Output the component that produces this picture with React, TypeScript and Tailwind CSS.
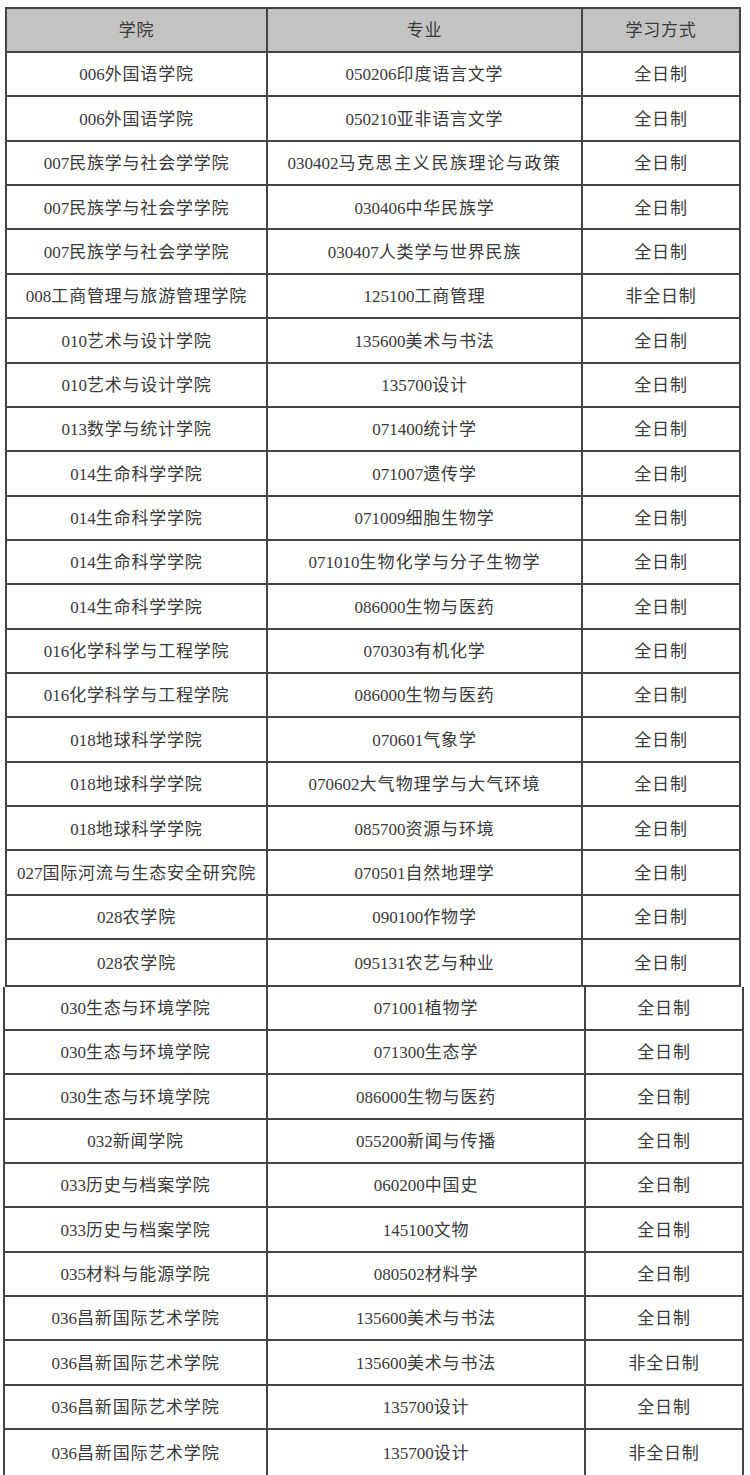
type Row = [string, string, string, string, string];

// [学院代码, 学院名, 专业代码, 专业名, 学习方式]
const topRows: Row[] = [
  ['006', '外国语学院', '050206', '印度语言文学', '全日制'],
  ['006', '外国语学院', '050210', '亚非语言文学', '全日制'],
  ['007', '民族学与社会学学院', '030402', '马克思主义民族理论与政策', '全日制'],
  ['007', '民族学与社会学学院', '030406', '中华民族学', '全日制'],
  ['007', '民族学与社会学学院', '030407', '人类学与世界民族', '全日制'],
  ['008', '工商管理与旅游管理学院', '125100', '工商管理', '非全日制'],
  ['010', '艺术与设计学院', '135600', '美术与书法', '全日制'],
  ['010', '艺术与设计学院', '135700', '设计', '全日制'],
  ['013', '数学与统计学院', '071400', '统计学', '全日制'],
  ['014', '生命科学学院', '071007', '遗传学', '全日制'],
  ['014', '生命科学学院', '071009', '细胞生物学', '全日制'],
  ['014', '生命科学学院', '071010', '生物化学与分子生物学', '全日制'],
  ['014', '生命科学学院', '086000', '生物与医药', '全日制'],
  ['016', '化学科学与工程学院', '070303', '有机化学', '全日制'],
  ['016', '化学科学与工程学院', '086000', '生物与医药', '全日制'],
  ['018', '地球科学学院', '070601', '气象学', '全日制'],
  ['018', '地球科学学院', '070602', '大气物理学与大气环境', '全日制'],
  ['018', '地球科学学院', '085700', '资源与环境', '全日制'],
  ['027', '国际河流与生态安全研究院', '070501', '自然地理学', '全日制'],
  ['028', '农学院', '090100', '作物学', '全日制'],
  ['028', '农学院', '095131', '农艺与种业', '全日制'],
];

const bottomRows: Row[] = [
  ['030', '生态与环境学院', '071001', '植物学', '全日制'],
  ['030', '生态与环境学院', '071300', '生态学', '全日制'],
  ['030', '生态与环境学院', '086000', '生物与医药', '全日制'],
  ['032', '新闻学院', '055200', '新闻与传播', '全日制'],
  ['033', '历史与档案学院', '060200', '中国史', '全日制'],
  ['033', '历史与档案学院', '145100', '文物', '全日制'],
  ['035', '材料与能源学院', '080502', '材料学', '全日制'],
  ['036', '昌新国际艺术学院', '135600', '美术与书法', '全日制'],
  ['036', '昌新国际艺术学院', '135600', '美术与书法', '非全日制'],
  ['036', '昌新国际艺术学院', '135700', '设计', '全日制'],
  ['036', '昌新国际艺术学院', '135700', '设计', '非全日制'],
];

// the scanned table stretches a few long major names
function majorSpacing(code: string) {
  if (code === '030402') return 'tracking-[1.6px]';
  if (code === '071010' || code === '070602') return 'tracking-[1.1px]';
  return 'tracking-[0.8px]';
}

function Cell({ code, name, spacing, className }: { code: string; name: string; spacing?: string; className: string }) {
  return (
    <div className={`flex items-center justify-center whitespace-nowrap pt-[2px] ${className}`}>
      <span>{code}</span>
      <span className={spacing ?? 'tracking-[0.8px]'}>{name}</span>
    </div>
  );
}

export default function App() {
  return (
    <div
      className="w-[750px] h-[1475px] bg-white text-[17px] text-[#3a3a3a] overflow-hidden"
      style={{ fontFamily: '"Liberation Serif", "Noto Sans CJK SC", serif' }}
    >
      <div className="pt-[7px] pl-[5px]">
        {/* first page of the scan */}
        <div className="w-[736px] border-2 border-[#444]">
          <div className="grid grid-cols-[261px_315px_156px] h-[44px] bg-[#c3c3c3] border-b-2 border-[#444]">
            <div className="flex items-center justify-center pt-[2px] border-r-2 border-[#444] tracking-[0.8px]">学院</div>
            <div className="flex items-center justify-center pt-[2px] border-r-2 border-[#444] tracking-[0.8px]">专业</div>
            <div className="flex items-center justify-center pt-[2px] tracking-[0.8px]">学习方式</div>
          </div>
          {topRows.map((r, i) => (
            <div
              key={i}
              className={`grid grid-cols-[261px_315px_156px] h-[44.36px] ${i < topRows.length - 1 ? 'border-b-2 border-[#444]' : ''}`}
            >
              <Cell code={r[0]} name={r[1]} className="border-r-2 border-[#444]" />
              <Cell code={r[2]} name={r[3]} spacing={majorSpacing(r[2])} className="border-r-2 border-[#444]" />
              <div className="flex items-center justify-center pt-[2px] tracking-[0.8px]">{r[4]}</div>
            </div>
          ))}
        </div>
      </div>

      {/* second page, pasted slightly offset */}
      <div className="pl-[3px]">
        <div className="w-[741px] border-x-2 border-b-2 border-[#444]">
          {bottomRows.map((r, i) => (
            <div
              key={i}
              className={`grid grid-cols-[263px_318px_156px] h-[44.36px] ${i < bottomRows.length - 1 ? 'border-b-2 border-[#444]' : ''}`}
            >
              <Cell code={r[0]} name={r[1]} className="border-r-2 border-[#444]" />
              <Cell code={r[2]} name={r[3]} spacing={majorSpacing(r[2])} className="border-r-2 border-[#444]" />
              <div className="flex items-center justify-center pt-[2px] tracking-[0.8px]">{r[4]}</div>
            </div>
          ))}
        </div>
      </div>
    </div>
  );
}
